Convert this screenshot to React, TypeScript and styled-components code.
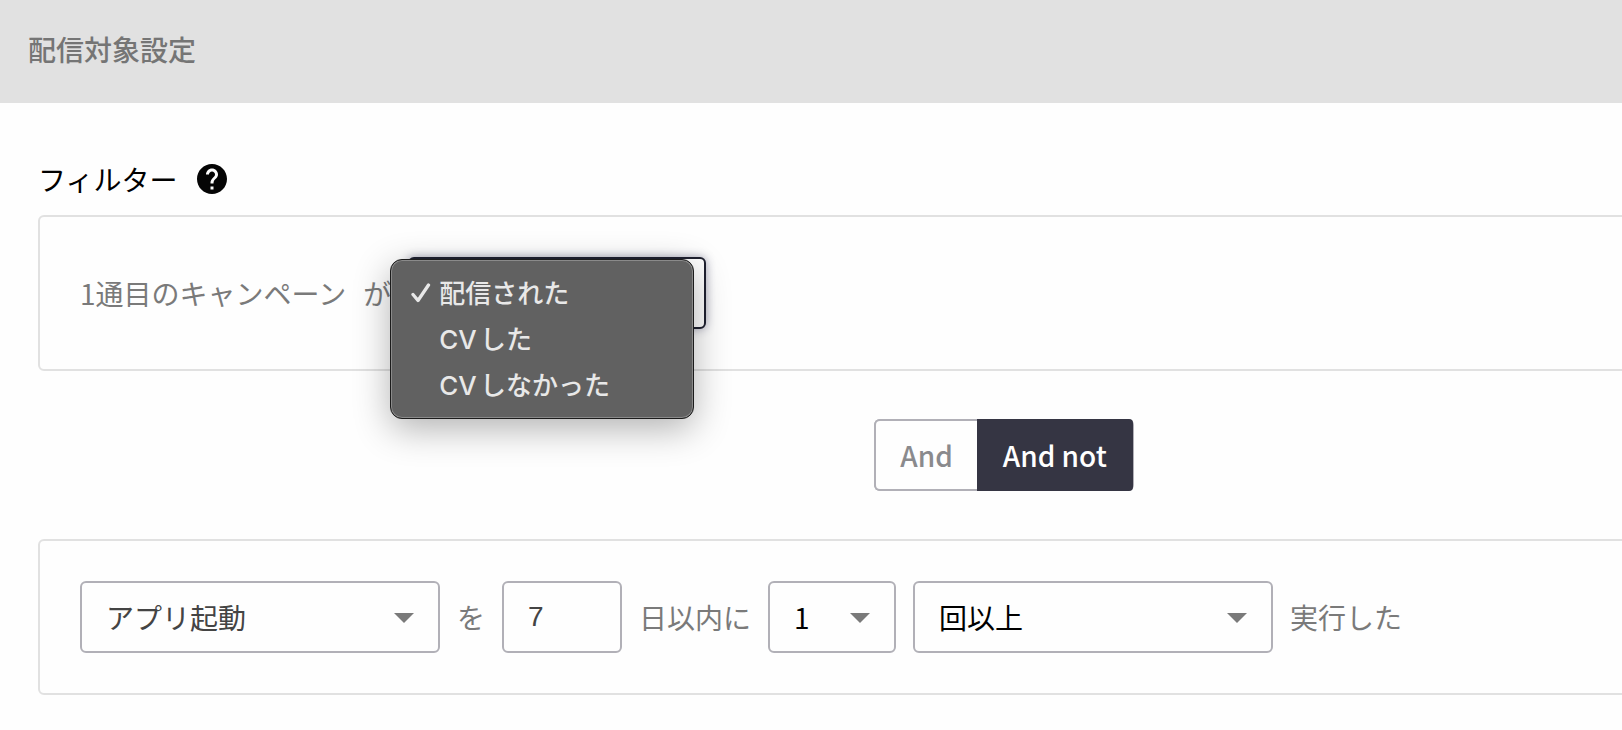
import React from "react";
import styled, { createGlobalStyle, css } from "styled-components";

const GlobalStyle = createGlobalStyle`
  *, *::before, *::after { box-sizing: border-box; }
  body {
    margin: 0;
    background: #fefefe;
    color: #000;
    font-family: "Noto Sans CJK JP", sans-serif;
    font-size: 28px;
    line-height: 40px;
  }
`;

const Page = styled.div`
  min-height: 100vh;
  overflow: hidden;
`;

const Header = styled.header`
  padding: 29px 28px 34px;
  background: #e1e1e1;
`;

const Title = styled.h1`
  margin: 0;
  color: #757575;
  font-size: 28px;
  font-weight: 500;
  line-height: 40px;
`;

/* The filter builder is wider than the window and runs off its right edge. */
const Content = styled.main`
  margin-right: -348px;
  padding: 56px 0 35px 38px;
`;

const SectionHeading = styled.div`
  display: flex;
  align-items: center;
  gap: 20px;
  height: 40px;
  margin-bottom: 16px;
`;

const SectionTitle = styled.h2`
  margin: 0;
  font-size: 28px;
  font-weight: 400;
  line-height: 40px;
`;

const HelpButton = styled.button`
  display: flex;
  padding: 0;
  border: 0;
  background: none;
  color: #050505;
`;

const Card = styled.section<{ $gap: number }>`
  display: flex;
  align-items: center;
  gap: ${(p) => p.$gap}px;
  padding: 40px;
  border: 2px solid #e1e1e1;
  border-radius: 6px;
`;

const Phrase = styled.span`
  color: #7a7a7a;
  white-space: nowrap;
`;

const fieldStyle = css`
  display: block;
  width: 100%;
  height: 72px;
  margin: 0;
  padding: 0 24px;
  border: 2px solid #b1b0b7;
  border-radius: 6px;
  background: #fefefe;
  font-family: inherit;
  font-size: 28px;
  outline: none;
`;

const SelectBox = styled.div<{ $width: number }>`
  position: relative;
  width: ${(p) => p.$width}px;
`;

const SelectField = styled.select<{ $tone?: string; $open?: boolean }>`
  ${fieldStyle}
  appearance: none;
  color: ${(p) => p.$tone ?? "#000"};
  ${(p) =>
    p.$open &&
    css`
      border-color: #1f2130;
      background: #fefefe;
      box-shadow: 0 0 10px rgba(50, 52, 90, 0.45);
    `}
`;

const Caret = styled.svg`
  position: absolute;
  top: 32px;
  right: 26px;
  pointer-events: none;
`;

const NumberField = styled.input`
  ${fieldStyle}
  width: 120px;
  color: #444;
  font-family: "Liberation Sans", Arial, sans-serif;
`;

const Menu = styled.ul`
  position: absolute;
  z-index: 1;
  top: 2px;
  left: -18px;
  width: 304px;
  margin: 0;
  padding: 11px 10px 9px;
  border: 1px solid #1c1c1c;
  border-radius: 12px;
  background: #616161;
  box-shadow:
    inset 0 0 0 1px #8a8a8a,
    0 10px 36px rgba(0, 0, 0, 0.3);
  color: #e8e8e8;
  font-family: Inter, "Noto Sans CJK JP", sans-serif;
  font-size: 26px;
  font-weight: 500;
  line-height: 46px;
  list-style: none;
  text-autospace: normal;
`;

const MenuItem = styled.li`
  display: grid;
  grid-template-columns: 28px 1fr;
  align-items: center;
  height: 46px;
  padding-left: 10px;
  white-space: nowrap;
`;

const OperatorRow = styled.div`
  display: flex;
  justify-content: center;
  padding: 48px 0;
`;

const Toggle = styled.div`
  display: flex;
  height: 72px;
  border-radius: 6px;
  background: #b1b0b7;
`;

const ToggleButton = styled.button<{ $active?: boolean }>`
  height: 72px;
  padding: 0 24px;
  border: 2px solid #b1b0b7;
  border-right: 0;
  border-radius: 6px 0 0 6px;
  background: #fefefe;
  color: #8a8a8d;
  font-family: inherit;
  font-size: 28px;
  font-weight: 500;
  ${(p) =>
    p.$active &&
    css`
      margin-right: 1px;
      padding: 0 26px;
      border: 0;
      border-radius: 0 4px 4px 0;
      background: #353543;
      color: #fff;
    `}
`;

function HelpIcon() {
  return (
    <svg width="30" height="30" viewBox="2 2 20 20" fill="currentColor" aria-hidden="true">
      <path d="M12 2C6.48 2 2 6.48 2 12s4.480 10 10 10 10-4.480 10-10S17.520 2 12 2zm1 17h-2v-2h2v2zm2.070-7.750l-.9.920C13.450 12.900 13 13.500 13 15h-2v-.5c0-1.100.45-2.100 1.170-2.830l1.240-1.260c.37-.36.59-.86.59-1.410 0-1.100-.9-2-2-2s-2 .9-2 2H8c0-2.210 1.790-4 4-4s4 1.790 4 4c0 .88-.36 1.680-.93 2.250z" />
    </svg>
  );
}

function CheckIcon() {
  return (
    <svg width="20" height="20" viewBox="0 0 20 20" fill="none" aria-hidden="true">
      <path
        d="M2 11.500L7 17.500L17.500 2"
        stroke="currentColor"
        strokeWidth="3.300"
        strokeLinecap="round"
        strokeLinejoin="round"
      />
    </svg>
  );
}

type DropdownProps = {
  label: string;
  options: string[];
  width: number;
  tone?: string;
  open?: boolean;
};

function Dropdown({ label, options, width, tone, open }: DropdownProps) {
  return (
    <SelectBox $width={width}>
      <SelectField aria-label={label} defaultValue={options[0]} $tone={tone} $open={open}>
        {options.map((o) => (
          <option key={o}>{o}</option>
        ))}
      </SelectField>
      {open ? (
        <Menu role="listbox" aria-label={label}>
          {options.map((o, i) => (
            <MenuItem key={o} role="option" aria-selected={i === 0}>
              <span>{i === 0 && <CheckIcon />}</span>
              <span>{o}</span>
            </MenuItem>
          ))}
        </Menu>
      ) : (
        <Caret width="20" height="10" viewBox="0 0 20 10" aria-hidden="true">
          <path d="M0 0H20L10 10Z" fill="#7a7a7a" />
        </Caret>
      )}
    </SelectBox>
  );
}

export default function App() {
  return (
    <Page lang="ja">
      <GlobalStyle />
      <Header>
        <Title>配信対象設定</Title>
      </Header>
      <Content>
        <SectionHeading>
          <SectionTitle>フィルター</SectionTitle>
          <HelpButton type="button" aria-label="ヘルプ">
            <HelpIcon />
          </HelpButton>
        </SectionHeading>

        <Card $gap={17}>
          <Phrase>1通目のキャンペーン</Phrase>
          <Phrase>が</Phrase>
          <Dropdown
            label="配信状況"
            options={["配信された", "CVした", "CVしなかった"]}
            width={298}
            open
          />
        </Card>

        <OperatorRow>
          <Toggle role="group" aria-label="条件">
            <ToggleButton type="button" aria-pressed={false}>
              And
            </ToggleButton>
            <ToggleButton type="button" aria-pressed $active>
              And not
            </ToggleButton>
          </Toggle>
        </OperatorRow>

        <Card $gap={17}>
          <Dropdown label="イベント" options={["アプリ起動"]} width={360} tone="#444" />
          <Phrase>を</Phrase>
          <NumberField type="text" inputMode="numeric" aria-label="日数" defaultValue="7" />
          <Phrase>日以内に</Phrase>
          <Dropdown label="回数" options={["1"]} width={128} />
          <Dropdown label="比較" options={["回以上"]} width={360} />
          <Phrase>実行した</Phrase>
        </Card>
      </Content>
    </Page>
  );
}
